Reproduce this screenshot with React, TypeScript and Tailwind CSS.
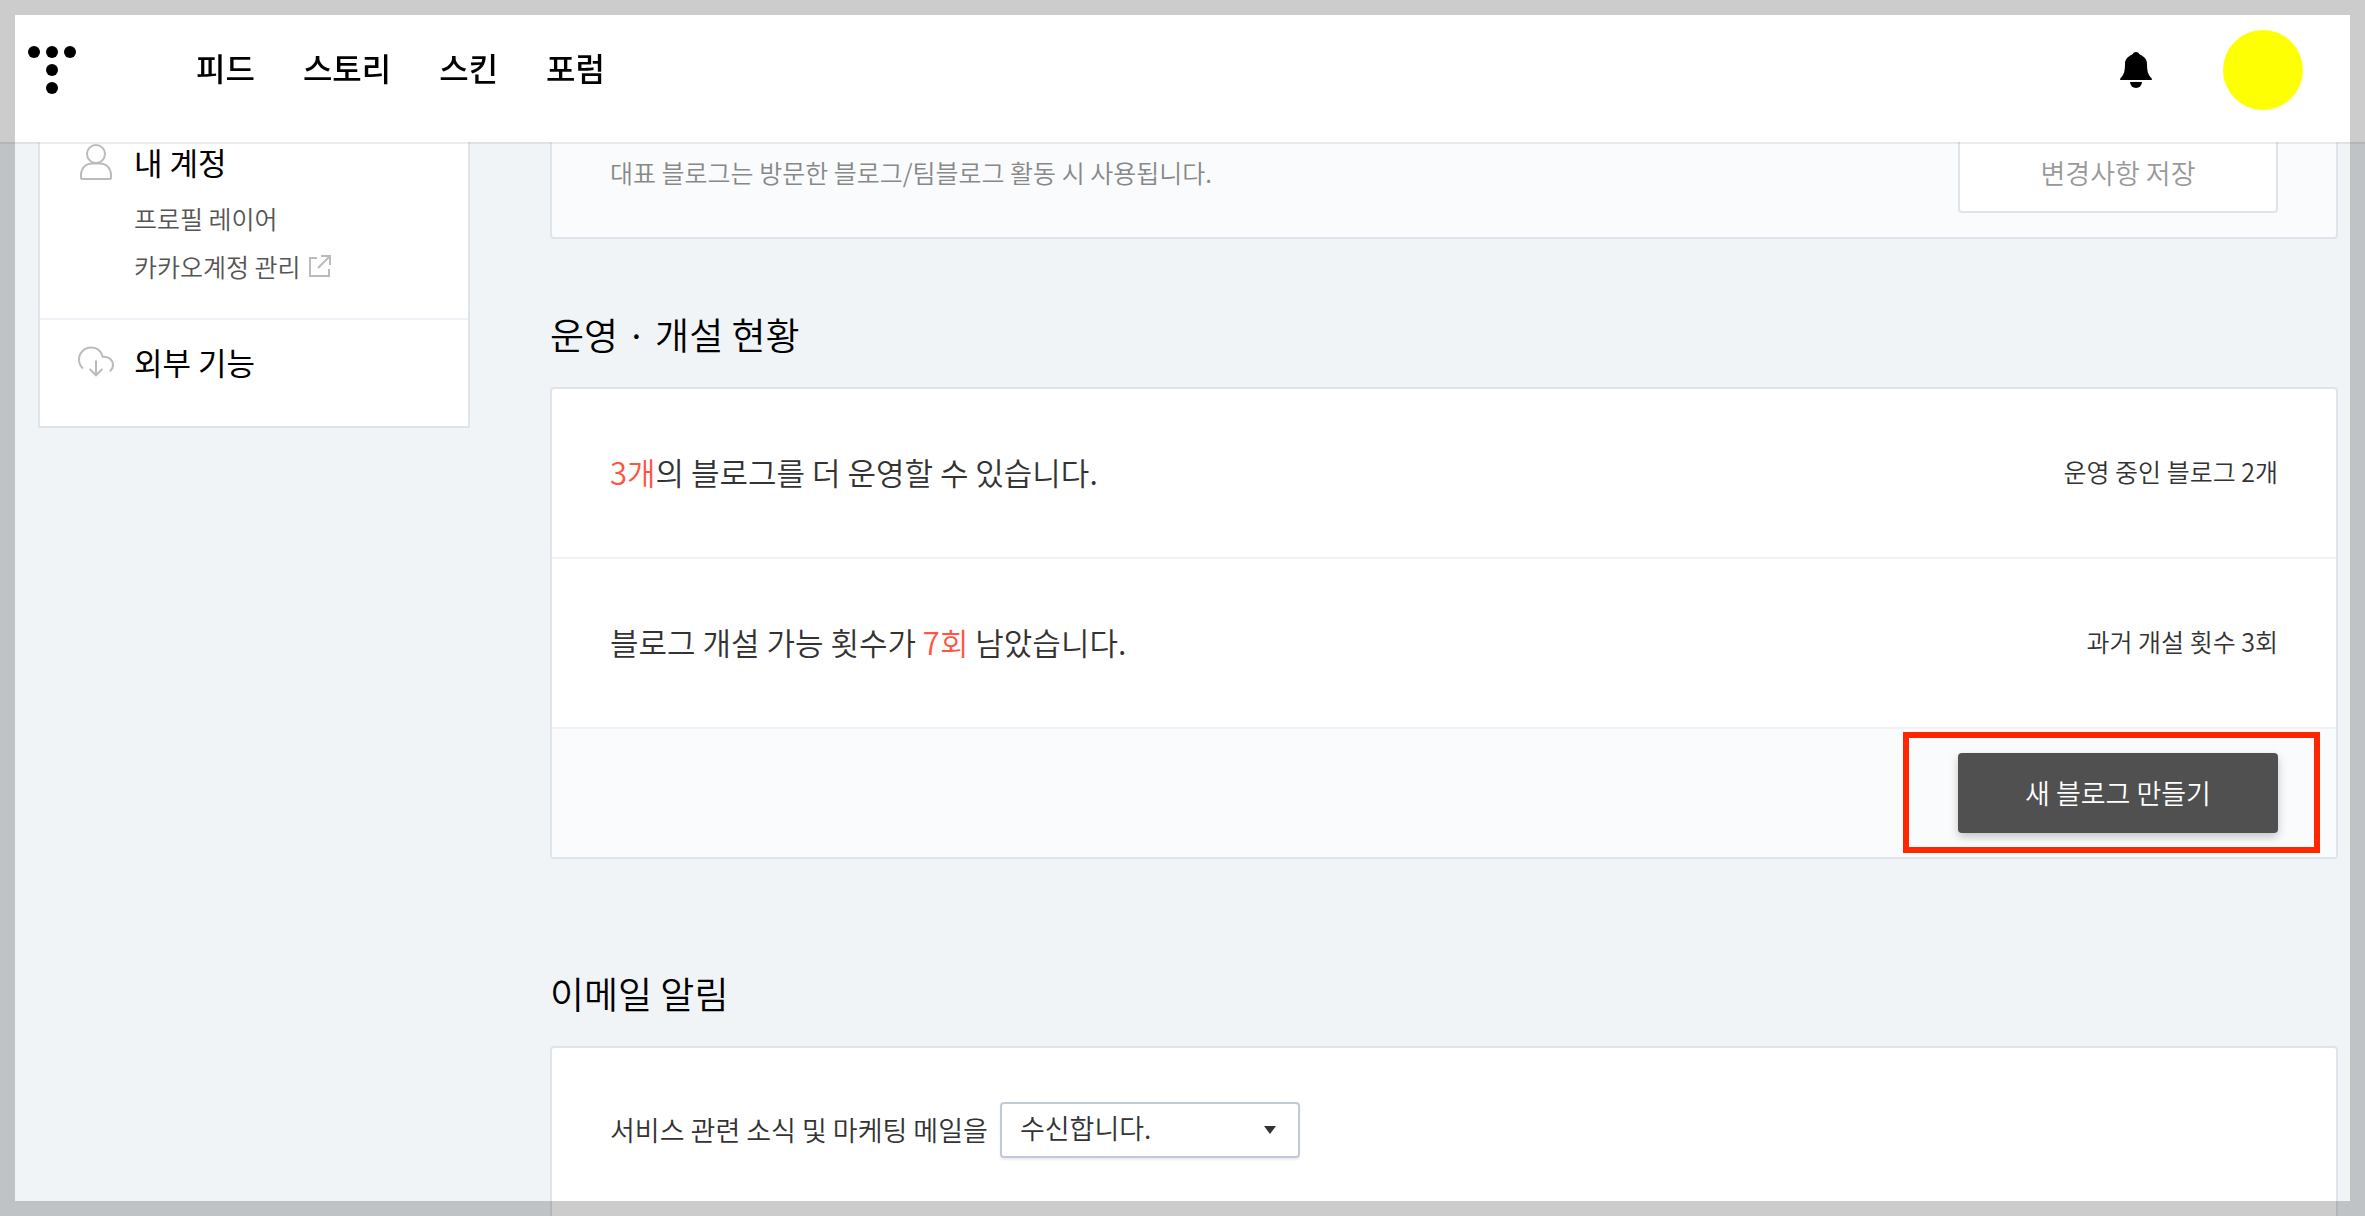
import { useState } from "react"
import type { ReactNode } from "react"

const navItems = ["피드", "스토리", "스킨", "포럼"]

function Logo() {
  return (
    <svg viewBox="0 0 48 48" className="h-12 w-12" aria-hidden="true">
      <circle cx="6" cy="6" r="6" />
      <circle cx="24" cy="6" r="6" />
      <circle cx="42" cy="6" r="6" />
      <circle cx="24" cy="24" r="6" />
      <circle cx="24" cy="42" r="6" />
    </svg>
  )
}

function BellIcon() {
  return (
    <svg viewBox="0 0 32 36" className="h-9 w-8" aria-hidden="true">
      <path d="M16 0c1.600 0 2.700.8 3.800 2.600C24.300 4.800 27 7.400 27 12c.1 7 .8 10.500 4.700 14.600.5.600.3 1.400-.5 1.400H.8c-.8 0-1-.8-.5-1.400C4.200 22.500 4.900 19 5 12c0-4.600 2.700-7.200 7.200-9.400C13.300.8 14.400 0 16 0z" />
      <path d="M10 30h12a6 6 0 0 1-12 0z" />
    </svg>
  )
}

function UserIcon() {
  return (
    <svg viewBox="0 0 36 36" className="h-9 w-9" fill="none" stroke="#bbb" strokeWidth="2" aria-hidden="true">
      <circle cx="18" cy="10" r="9" />
      <path d="M14 19.600h8c6.600 0 11 5 11 11.400v2.500c0 1-.6 1.500-1.500 1.500h-27c-.9 0-1.500-.5-1.500-1.500V31c0-6.400 4.400-11.400 11-11.400z" />
    </svg>
  )
}

function CloudIcon() {
  return (
    <svg viewBox="0 0 36 32" className="h-8 w-9" fill="none" stroke="#bbb" strokeWidth="2" aria-hidden="true">
      <path d="M5 22.500C2.400 20.200 1 17.200 1 13.500 1 6.700 6.500 1.500 13.300 1.500c5.300 0 9.800 3.500 11.600 9.300 5.600-.6 10.100 3.200 10.100 8.200 0 2.400-1.200 4.700-3.200 6.200" />
      <path d="M18 14.500V29M11.700 23l6.300 6.300 6.300-6.300" />
    </svg>
  )
}

function ExternalIcon() {
  return (
    <svg viewBox="0 0 22 22" className="h-[22px] w-[22px]" fill="none" stroke="#bbb" strokeWidth="2" aria-hidden="true">
      <path d="M8 3H1v18h19v-7M12 1h9v9M21 1 9 13" />
    </svg>
  )
}

function StatusRow({ children, note }: { children: ReactNode; note: string }) {
  return (
    <div className="flex h-[170px] items-center justify-between border-b-2 border-[#eff2f6] px-[58px] pb-[2px]">
      <p className="text-[31px] text-[#333]">{children}</p>
      <span className="text-[25px] text-[#333]">{note}</span>
    </div>
  )
}

export default function App() {
  const [mail, setMail] = useState("on")

  return (
    <div className="h-screen overflow-hidden bg-[#f0f4f7] font-['Noto_Sans_CJK_KR',sans-serif] font-[350] text-black">
      <header className="fixed inset-x-0 top-0 z-10 flex h-[142px] items-center bg-white pr-[62px] pb-[2px] pl-7 shadow-[0_2px_0_rgba(0,0,0,0.07)]">
        <a href="#" aria-label="티스토리">
          <Logo />
        </a>
        <nav className="ml-[120px] flex gap-12 pb-[6px]">
          {navItems.map((item) => (
            <a key={item} href="#" className="text-[32px] leading-[48px] font-medium">
              {item}
            </a>
          ))}
        </nav>
        <button type="button" aria-label="알림" className="ml-auto">
          <BellIcon />
        </button>
        <button type="button" aria-label="프로필" className="ml-[71px] h-20 w-20 rounded-full bg-[#ffff04]" />
      </header>

      <div className="flex items-start gap-20 pt-[107px] pr-[27px] pl-[38px]">
        <aside className="w-[432px] shrink-0 border-2 border-[#dfe4ec] bg-white">
          <section className="border-b-2 border-[#eff3f7] pt-[29px] pr-6 pb-[28px] pl-[38px]">
            <h2 className="flex items-center gap-5 text-[31px] leading-[48px] font-normal">
              <UserIcon />
              내 계정
            </h2>
            <ul className="mt-2 pl-14 text-[25px] leading-[48px] text-[#555]">
              <li>
                <a href="#">프로필 레이어</a>
              </li>
              <li>
                <a href="#" className="flex items-center gap-2">
                  카카오계정 관리
                  <ExternalIcon />
                </a>
              </li>
            </ul>
          </section>
          <section className="pt-[18px] pr-6 pb-10 pl-[38px]">
            <h2 className="flex items-center gap-5 text-[31px] leading-[48px] font-normal">
              <CloudIcon />
              외부 기능
            </h2>
          </section>
        </aside>

        <main className="min-w-0 flex-1">
          <section className="flex items-center justify-between rounded-sm border-2 border-[#dfe4ec] bg-[#fafbfd] px-[58px] py-6">
            <p className="text-[25px] text-[#888]">대표 블로그는 방문한 블로그/팀블로그 활동 시 사용됩니다.</p>
            <button
              type="button"
              className="h-20 w-80 rounded-sm border-2 border-[#dfe4ec] bg-white text-[27px] text-[#999]"
            >
              변경사항 저장
            </button>
          </section>

          <h2 className="mt-[65px] mb-[23px] text-[37px] leading-[60px]">운영 · 개설 현황</h2>
          <section className="rounded-sm border-2 border-[#dfe4ec] bg-white">
            <StatusRow note="운영 중인 블로그 2개">
              <em className="text-[#ff5544] not-italic">3개</em>의 블로그를 더 운영할 수 있습니다.
            </StatusRow>
            <StatusRow note="과거 개설 횟수 3회">
              블로그 개설 가능 횟수가 <em className="text-[#ff5544] not-italic">7회</em> 남았습니다.
            </StatusRow>
            <div className="flex justify-end bg-[#fafbfd] px-[58px] py-6">
              <div className="relative">
                <button
                  type="button"
                  className="block h-20 w-80 rounded-sm bg-[#505050] text-[27px] text-white shadow-[0_4px_10px_rgba(0,0,0,0.22)]"
                >
                  새 블로그 만들기
                </button>
                <div className="pointer-events-none absolute -top-[21px] -right-[42px] -bottom-5 -left-[55px] border-6 border-[#ff2600]" />
              </div>
            </div>
          </section>

          <h2 className="mt-[104px] mb-[23px] text-[37px] leading-[60px]">이메일 알림</h2>
          <section className="flex items-center gap-3 rounded-sm border-2 border-[#dfe4ec] bg-white px-[58px] pt-[54px] pb-[120px]">
            <label htmlFor="mail" className="text-[27px] text-[#333]">
              서비스 관련 소식 및 마케팅 메일을
            </label>
            <div className="relative">
              <select
                id="mail"
                value={mail}
                onChange={(e) => setMail(e.target.value)}
                className="block h-14 w-[300px] appearance-none rounded-sm border-2 border-[#c1cad6] bg-white pb-1 pl-[18px] text-[27px] leading-[48px] text-[#333] shadow-[0_2px_2px_rgba(0,0,0,0.08)]"
              >
                <option value="on">수신합니다.</option>
                <option value="off">수신하지 않습니다.</option>
              </select>
              <svg
                viewBox="0 0 12 8"
                className="pointer-events-none absolute top-6 right-6 h-2 w-3"
                fill="#333"
                aria-hidden="true"
              >
                <path d="M0 0h12L6 8z" />
              </svg>
            </div>
          </section>
        </main>
      </div>

      {/* translucent frame around the window */}
      <div className="pointer-events-none fixed inset-0 z-20 border-[15px] border-black/20" />
    </div>
  )
}
